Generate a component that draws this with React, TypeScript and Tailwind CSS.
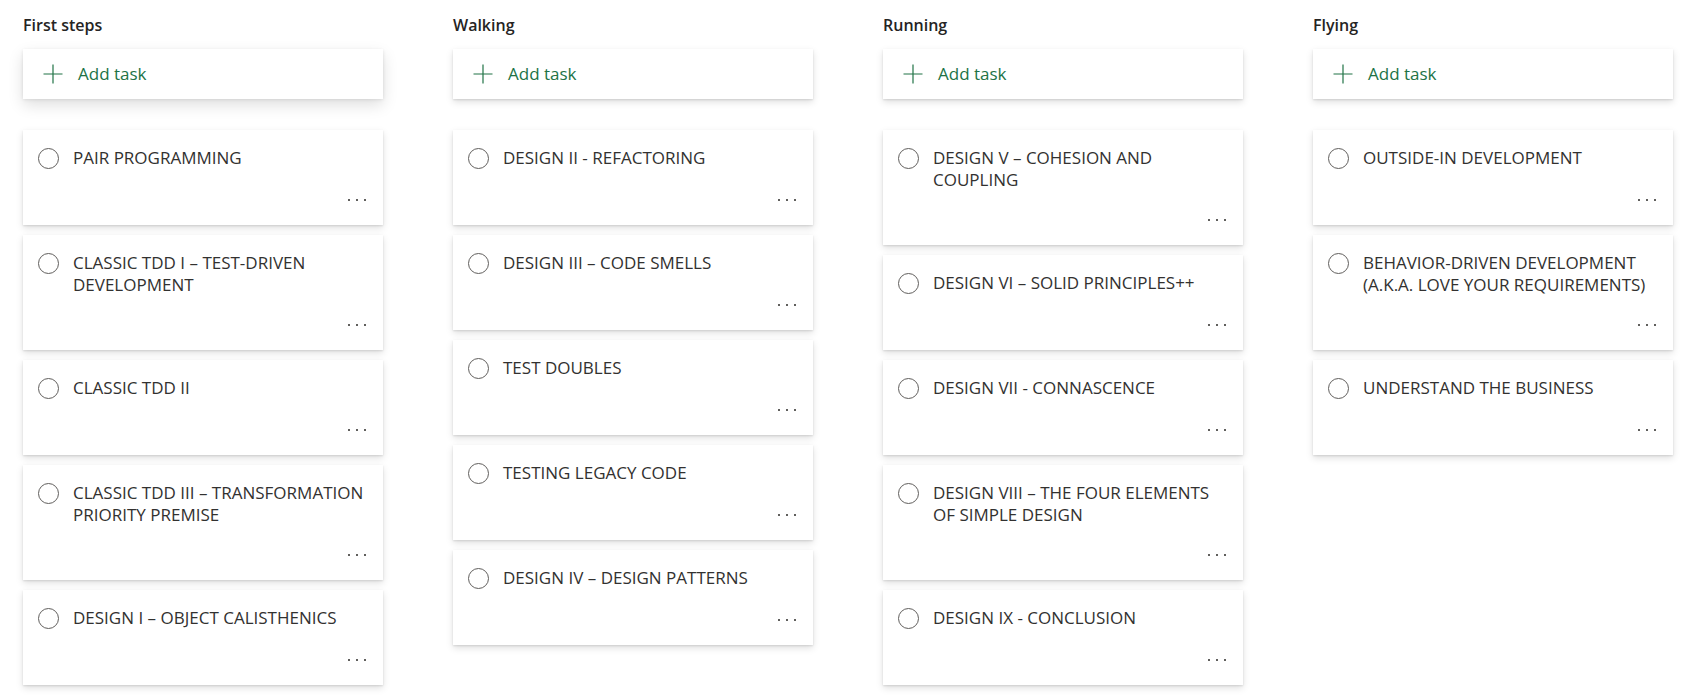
import React from "react";

type Bucket = { name: string; tasks: string[]; active?: boolean };

const buckets: Bucket[] = [
  {
    name: "First steps",
    active: true,
    tasks: [
      "PAIR PROGRAMMING",
      "CLASSIC TDD I – TEST-DRIVEN\nDEVELOPMENT",
      "CLASSIC TDD II",
      "CLASSIC TDD III – TRANSFORMATION\nPRIORITY PREMISE",
      "DESIGN I – OBJECT CALISTHENICS",
    ],
  },
  {
    name: "Walking",
    tasks: [
      "DESIGN II - REFACTORING",
      "DESIGN III – CODE SMELLS",
      "TEST DOUBLES",
      "TESTING LEGACY CODE",
      "DESIGN IV – DESIGN PATTERNS",
    ],
  },
  {
    name: "Running",
    tasks: [
      "DESIGN V – COHESION AND\nCOUPLING",
      "DESIGN VI – SOLID PRINCIPLES++",
      "DESIGN VII - CONNASCENCE",
      "DESIGN VIII – THE FOUR ELEMENTS\nOF SIMPLE DESIGN",
      "DESIGN IX - CONCLUSION",
    ],
  },
  {
    name: "Flying",
    tasks: [
      "OUTSIDE-IN DEVELOPMENT",
      "BEHAVIOR-DRIVEN DEVELOPMENT\n(A.K.A. LOVE YOUR REQUIREMENTS)",
      "UNDERSTAND THE BUSINESS",
    ],
  },
];

function PlusIcon() {
  return (
    <svg width="20" height="20" viewBox="0 0 20 20" className="shrink-0">
      <path d="M10 0.5V19.5M0.5 10H19.5" stroke="#217346" strokeWidth="1.2" fill="none" />
    </svg>
  );
}

function TaskCard({ title }: { title: string }) {
  return (
    <div className="flex flex-col bg-white shadow-[0_3.2px_7.2px_rgba(0,0,0,0.13),0_0.6px_1.8px_rgba(0,0,0,0.11)]">
      <div className="flex min-h-[41px] items-start pl-[15px] pr-[10px] pt-[17px]">
        <div className="mt-[0.5px] h-[21px] w-[21px] shrink-0 rounded-full border border-[#605e5c]" />
        <div className="ml-[14px] whitespace-pre-line text-[17px] leading-[22px] text-[#323130]">
          {title}
        </div>
      </div>
      <div className="flex h-[54px] items-end justify-end gap-[6px] pb-[24px] pr-[17px]">
        <span className="h-[2px] w-[2px] bg-[#605e5c]" />
        <span className="h-[2px] w-[2px] bg-[#605e5c]" />
        <span className="h-[2px] w-[2px] bg-[#605e5c]" />
      </div>
    </div>
  );
}

function Column({ bucket }: { bucket: Bucket }) {
  return (
    <div className="flex w-[360px] shrink-0 flex-col">
      <h2 className="text-[16px] font-semibold leading-[22px] text-[#252423]">{bucket.name}</h2>
      <div
        className={
          bucket.active
            ? "mt-[13px] flex h-[50px] items-center gap-[15px] bg-white pl-[20px] shadow-[0_6.4px_14.4px_rgba(0,0,0,0.13),0_1.2px_3.6px_rgba(0,0,0,0.11)]"
            : "mt-[13px] flex h-[50px] items-center gap-[15px] bg-white pl-[20px] shadow-[0_3.2px_7.2px_rgba(0,0,0,0.13),0_0.6px_1.8px_rgba(0,0,0,0.11)]"
        }
      >
        <PlusIcon />
        <span className="text-[17px] text-[#217346]">Add task</span>
      </div>
      <div className="mt-[31px] flex flex-col gap-[10px]">
        {bucket.tasks.map((t) => (
          <TaskCard key={t} title={t} />
        ))}
      </div>
    </div>
  );
}

export default function App() {
  return (
    <div
      className="min-h-screen bg-white pl-[23px] pt-[14px]"
      style={{ fontFamily: '"Open Sans", "Noto Sans", sans-serif' }}
    >
      <div className="flex gap-[70px]">
        {buckets.map((b) => (
          <Column key={b.name} bucket={b} />
        ))}
      </div>
    </div>
  );
}
